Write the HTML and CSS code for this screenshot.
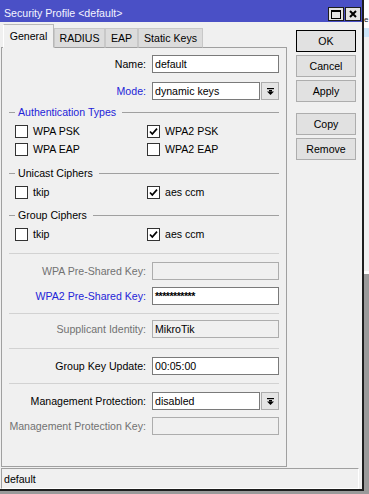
FILE: index.html
```html
<!DOCTYPE html>
<html>
<head>
<meta charset="utf-8">
<link rel="stylesheet" href="styles.css">
</head>
<body>
<div class="screen">
  <div class="window">
    <div class="titlebar">
      <span class="title">Security Profile &lt;default&gt;</span>
      <div class="tb-buttons">
        <span class="tb-btn"><svg width="10" height="9" viewBox="0 0 10 9"><rect x="0.5" y="0.5" width="9" height="8" fill="none" stroke="#000"/><rect x="0" y="0" width="10" height="2" fill="#000"/></svg></span>
        <span class="tb-btn"><svg width="8" height="8" viewBox="0 0 8 8"><path d="M1 1L7 7M7 1L1 7" stroke="#000" stroke-width="2" fill="none"/></svg></span>
      </div>
    </div>
    <div class="main">
      <div class="tabbox">
        <div class="tabs">
          <span class="tab-lead"></span>
          <div class="tab active">General</div>
          <div class="tab w-radius">RADIUS</div>
          <div class="tab w-eap">EAP</div>
          <div class="tab w-static">Static Keys</div>
          <span class="tab-fill"></span>
        </div>
        <div class="panel">
          <div class="row first"><span class="lbl">Name:</span><div class="field">default</div></div>
          <div class="row mode"><span class="lbl blue">Mode:</span>
            <div class="combo"><div class="field">dynamic keys</div><span class="drop"><svg width="7" height="7" viewBox="0 0 7 7"><rect x="0" y="0" width="7" height="1.2" fill="#000"/><rect x="2" y="2" width="3" height="1.5" fill="#000"/><path d="M0 3.4H7L3.5 7Z" fill="#000"/></svg></span></div>
          </div>
          <div class="group-title blue auth">Authentication Types</div>
          <div class="checks">
            <span class="chk"><span class="box"></span>WPA PSK</span>
            <span class="chk"><span class="box"><svg width="11" height="11" viewBox="0 0 11 11"><path d="M2 5.5L4.3 8L9 2.6" stroke="#000" stroke-width="1.7" fill="none"/></svg></span>WPA2 PSK</span>
            <span class="chk"><span class="box"></span>WPA EAP</span>
            <span class="chk"><span class="box"></span>WPA2 EAP</span>
          </div>
          <div class="group-title unicast">Unicast Ciphers</div>
          <div class="checks">
            <span class="chk"><span class="box"></span>tkip</span>
            <span class="chk"><span class="box"><svg width="11" height="11" viewBox="0 0 11 11"><path d="M2 5.5L4.3 8L9 2.6" stroke="#000" stroke-width="1.7" fill="none"/></svg></span>aes ccm</span>
          </div>
          <div class="group-title group">Group Ciphers</div>
          <div class="checks">
            <span class="chk"><span class="box"></span>tkip</span>
            <span class="chk"><span class="box"><svg width="11" height="11" viewBox="0 0 11 11"><path d="M2 5.5L4.3 8L9 2.6" stroke="#000" stroke-width="1.7" fill="none"/></svg></span>aes ccm</span>
          </div>
          <div class="sep sep-a"></div>
          <div class="row after-sep"><span class="lbl gray">WPA Pre-Shared Key:</span><div class="field disabled"></div></div>
          <div class="row next"><span class="lbl blue">WPA2 Pre-Shared Key:</span><div class="field pw">***********</div></div>
          <div class="sep sep-b"></div>
          <div class="row after-sep tight"><span class="lbl gray">Supplicant Identity:</span><div class="field disabled">MikroTik</div></div>
          <div class="sep sep-c"></div>
          <div class="row after-sep"><span class="lbl">Group Key Update:</span><div class="field">00:05:00</div></div>
          <div class="sep sep-b"></div>
          <div class="row after-sep"><span class="lbl">Management Protection:</span>
            <div class="combo"><div class="field">disabled</div><span class="drop"><svg width="7" height="7" viewBox="0 0 7 7"><rect x="0" y="0" width="7" height="1.2" fill="#000"/><rect x="2" y="2" width="3" height="1.5" fill="#000"/><path d="M0 3.4H7L3.5 7Z" fill="#000"/></svg></span></div>
          </div>
          <div class="row next"><span class="lbl gray">Management Protection Key:</span><div class="field disabled"></div></div>
        </div>
      </div>
      <div class="actions">
        <button class="btn default">OK</button>
        <button class="btn">Cancel</button>
        <button class="btn">Apply</button>
        <button class="btn spaced">Copy</button>
        <button class="btn">Remove</button>
      </div>
    </div>
    <div class="status">default</div>
  </div>
  <div class="outside">
    <div class="o-top">e</div>
    <div class="o-blue"></div>
    <div class="o-mid"></div>
    <div class="o-line"></div>
  </div>
</div>
</body>
</html>
```

FILE: styles.css
```css
* { box-sizing: border-box; }
html, body { margin: 0; padding: 0; }
body {
  width: 369px;
  height: 494px;
  overflow: hidden;
  background: #9a9a9a;
  font-family: "Liberation Sans", Arial, sans-serif;
  font-size: 10.6px;
  color: #000;
}
.screen { display: flex; align-items: flex-start; }
.window {
  width: 364px;
  height: 491px;
  background: #f0f0f0;
  border-right: 2px solid #1e1e1e;
  border-bottom: 2px solid #1e1e1e;
  display: flex;
  flex-direction: column;
  flex-shrink: 0;
}
.titlebar {
  height: 22px;
  background: #4a50c6;
  display: flex;
  align-items: flex-end;
  padding: 0 1px 1px 4px;
}
.title {
  flex: 1;
  color: #f4f4ff;
  line-height: 14px;
  padding-bottom: 1px;
  white-space: nowrap;
}
.tb-buttons { display: flex; gap: 1px; }
.tb-btn {
  width: 16px;
  height: 14px;
  background: #e4e4e4;
  border: 1px solid #1e1e1e;
  display: flex;
  align-items: center;
  justify-content: center;
}
.main { display: flex; padding-left: 1px; height: 445px; }
.tabbox { width: 286px; margin-top: 2px; display: flex; flex-direction: column; }
.tabs { display: flex; align-items: flex-end; height: 24px; }
.tab-lead { width: 2px; height: 1px; background: #a0a0a0; }
.tab-fill { flex: 1; height: 1px; background: #a0a0a0; }
.tab {
  height: 20px;
  border: 1px solid #c8c8c8;
  border-bottom-color: #a0a0a0;
  background: #dcdcdc;
  display: flex;
  align-items: center;
  justify-content: center;
  white-space: nowrap;
}
.tab.active {
  width: 51px;
  height: 24px;
  background: #f0f0f0;
  border-color: #b8b8b8;
  border-left-color: #ffffff;
  border-bottom-color: #f0f0f0;
}
.w-radius { width: 51px; }
.w-eap { width: 33px; }
.w-static { width: 65px; }
.panel {
  height: 419px;
  border: 1px solid #a0a0a0;
  border-top: none;
}
.row {
  display: grid;
  grid-template-columns: 144px 127px;
  column-gap: 6px;
  align-items: center;
  height: 18px;
}
.row.first { margin-top: 7px; }
.row.mode { margin-top: 9px; }
.row.after-sep { margin-top: 8px; }
.row.after-sep.tight { margin-top: 6px; }
.row.next { margin-top: 7px; }
.lbl { text-align: right; white-space: nowrap; }
.blue { color: #2424d8; }
.gray { color: #727272; }
.field {
  height: 18px;
  border: 1px solid #7a7a7a;
  background: #fff;
  padding-left: 2px;
  line-height: 16px;
  white-space: nowrap;
  overflow: hidden;
}
.field.disabled { background: #f0f0f0; border-color: #adadad; }
.field.pw { font-weight: bold; letter-spacing: -0.5px; }
.combo { display: flex; gap: 1px; }
.combo .field { flex: 1; }
.drop {
  width: 18px;
  height: 18px;
  border: 1px solid #adadad;
  background: #e5e5e5;
  display: flex;
  align-items: center;
  justify-content: center;
}
.group-title {
  display: flex;
  align-items: center;
  height: 14px;
  margin-left: 7px;
  width: 270px;
  white-space: nowrap;
}
.group-title::before {
  content: "";
  width: 6px;
  height: 1px;
  background: #a0a0a0;
  margin-right: 3px;
}
.group-title::after {
  content: "";
  flex: 1;
  height: 1px;
  background: #a0a0a0;
  margin-left: 6px;
}
.group-title.auth { margin-top: 5px; }
.group-title.unicast { margin-top: 8px; }
.group-title.group { margin-top: 7px; }
.checks {
  display: grid;
  grid-template-columns: 132px 1fr;
  grid-auto-rows: 18px;
  padding-left: 13px;
  margin-top: 3px;
}
.chk { display: flex; align-items: center; gap: 5px; white-space: nowrap; }
.box {
  width: 13px;
  height: 13px;
  border: 1px solid #333;
  background: #fff;
  display: flex;
  align-items: center;
  justify-content: center;
}
.sep { height: 1px; margin-left: 7px; width: 270px; background: #d2d2d2; }
.sep-a { margin-top: 10px; }
.sep-b { margin-top: 8px; }
.sep-c { margin-top: 10px; }
.actions {
  margin-left: 9px;
  width: 60px;
  padding-top: 8px;
  display: flex;
  flex-direction: column;
  gap: 3px;
}
.btn {
  height: 22px;
  width: 60px;
  background: #e1e1e1;
  border: 1px solid #adadad;
  font: inherit;
  color: #000;
  padding: 0;
}
.btn.default { border-color: #000; }
.btn.spaced { margin-top: 8px; }
.status {
  margin-top: 1px;
  margin-left: 1px;
  width: 358px;
  height: 21px;
  border: 1px solid;
  border-color: #a0a0a0 #ffffff #ffffff #a0a0a0;
  padding-left: 2px;
  display: flex;
  align-items: center;
}
.outside {
  width: 5px;
  height: 494px;
  display: flex;
  flex-direction: column;
  overflow: hidden;
  flex-shrink: 0;
}
.o-top {
  height: 28px;
  background: #fff;
  padding-top: 15px;
  line-height: 9px;
  font-size: 8px;
  color: #222;
  overflow: hidden;
}
.o-blue { height: 9px; background: #cce4f7; }
.o-mid { height: 234px; background: #f0f0f0; }
.o-line { height: 3px; background: #fff; }
```
